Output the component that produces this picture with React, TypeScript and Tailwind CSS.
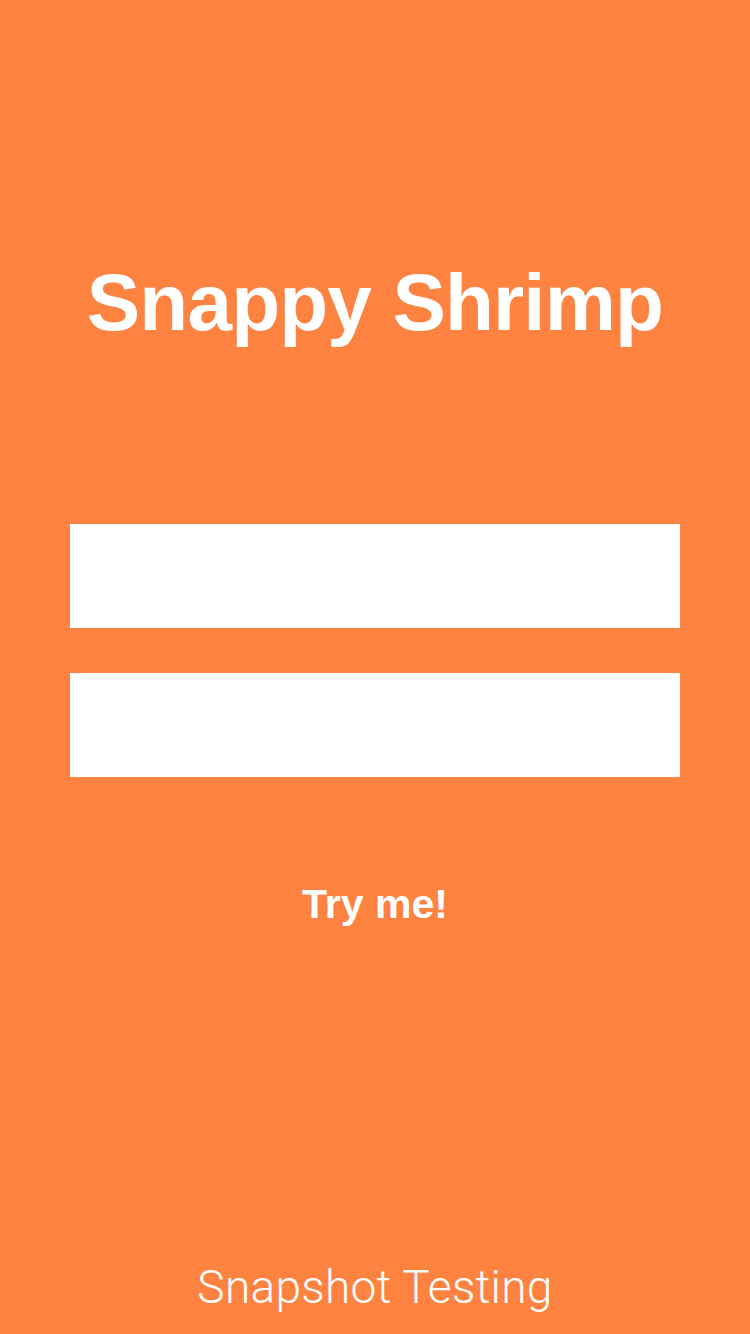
import React from 'react';

const App: React.FC = () => {
  return (
    <div className="w-[750px] h-[1334px] bg-[#FF8340] flex flex-col items-center overflow-hidden text-white font-['Liberation_Sans',Arial,sans-serif]">
      <h1 className="mt-[263px] text-[80px] leading-none font-bold tracking-[-0.8px]">Snappy Shrimp</h1>

      <div className="mt-[181px] w-[610px] flex flex-col gap-[45px]">
        <div className="h-[104px] bg-white" />
        <div className="h-[104px] bg-white" />
      </div>

      <button className="mt-[107px] text-[41px] leading-none font-bold">Try me!</button>

      <p className="mt-[339px] text-[46px] leading-none font-light font-['Roboto',sans-serif] tracking-[0.3px]">Snapshot Testing</p>
    </div>
  );
};

export default App;
